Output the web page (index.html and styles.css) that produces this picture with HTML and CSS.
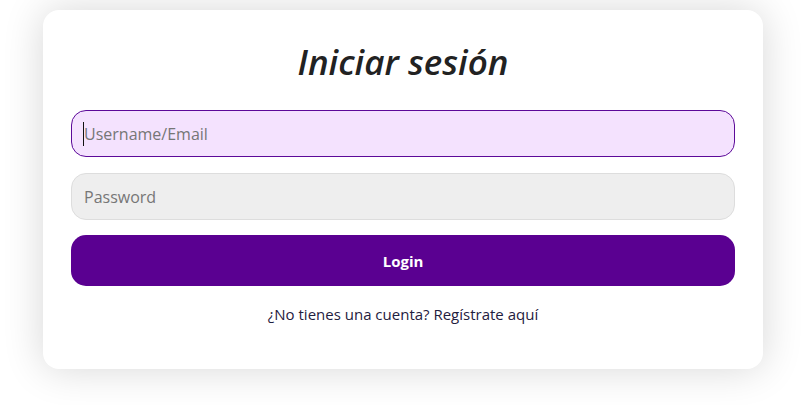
FILE: index.html
```html
<!DOCTYPE html>
<html lang="es">
<head>
<meta charset="utf-8">
<title>Iniciar sesión</title>
<link rel="stylesheet" href="styles.css">
</head>
<body>
<main class="page">
  <form class="card">
    <h1 class="title">Iniciar sesión</h1>
    <div class="field field-active">
      <input class="input input-focus" type="text" placeholder="Username/Email">
    </div>
    <div class="field">
      <input class="input" type="password" placeholder="Password">
    </div>
    <button class="btn" type="button">Login</button>
    <p class="signup"><a class="signup-link" href="#">¿No tienes una cuenta? Regístrate aquí</a></p>
  </form>
</main>
</body>
</html>
```

FILE: styles.css
```css
* { box-sizing: border-box; }
html, body { margin: 0; padding: 0; background: #ffffff; }
body { font-family: "Open Sans", "Noto Sans", sans-serif; color: #222; min-height: 100vh; overflow: hidden; }
.page { padding: 10px 42px 34px 43px; }
.card {
  width: 720px;
  background: #fff;
  border-radius: 16px;
  box-shadow: 0 0 40px rgba(0,0,0,0.16);
  padding: 28px 28px 45px;
  display: flex;
  flex-direction: column;
}
.title {
  margin: 0 0 24px;
  text-align: center;
  font-style: italic;
  font-weight: 600;
  font-size: 35px;
  line-height: 48px;
  color: #222;
}
.field { position: relative; margin-bottom: 16px; }
.field-active::after {
  content: "";
  position: absolute;
  left: 12px;
  top: 12px;
  width: 1px;
  height: 24px;
  background: #111;
}
.input {
  display: block;
  width: 100%;
  height: 47px;
  padding: 0 12px;
  border: 1px solid #ddd;
  border-radius: 15px;
  background: #eeeeee;
  font-family: inherit;
  font-size: 16px;
  color: #222;
  outline: none;
}
.input::placeholder { color: #767676; }
.input-focus {
  border-color: #5c0a99;
  background: #f4e2fe;
  caret-color: transparent;
}
.btn {
  height: 51px;
  border: none;
  border-radius: 15px;
  background: #5a0091;
  color: #fff;
  font-family: inherit;
  font-weight: 700;
  font-size: 15px;
  margin-top: -1px;
}
.signup {
  margin: 18px 0 0;
  text-align: center;
  font-size: 15px;
  line-height: 20px;
}
.signup-link { color: #1f2040; text-decoration: none; }
```
